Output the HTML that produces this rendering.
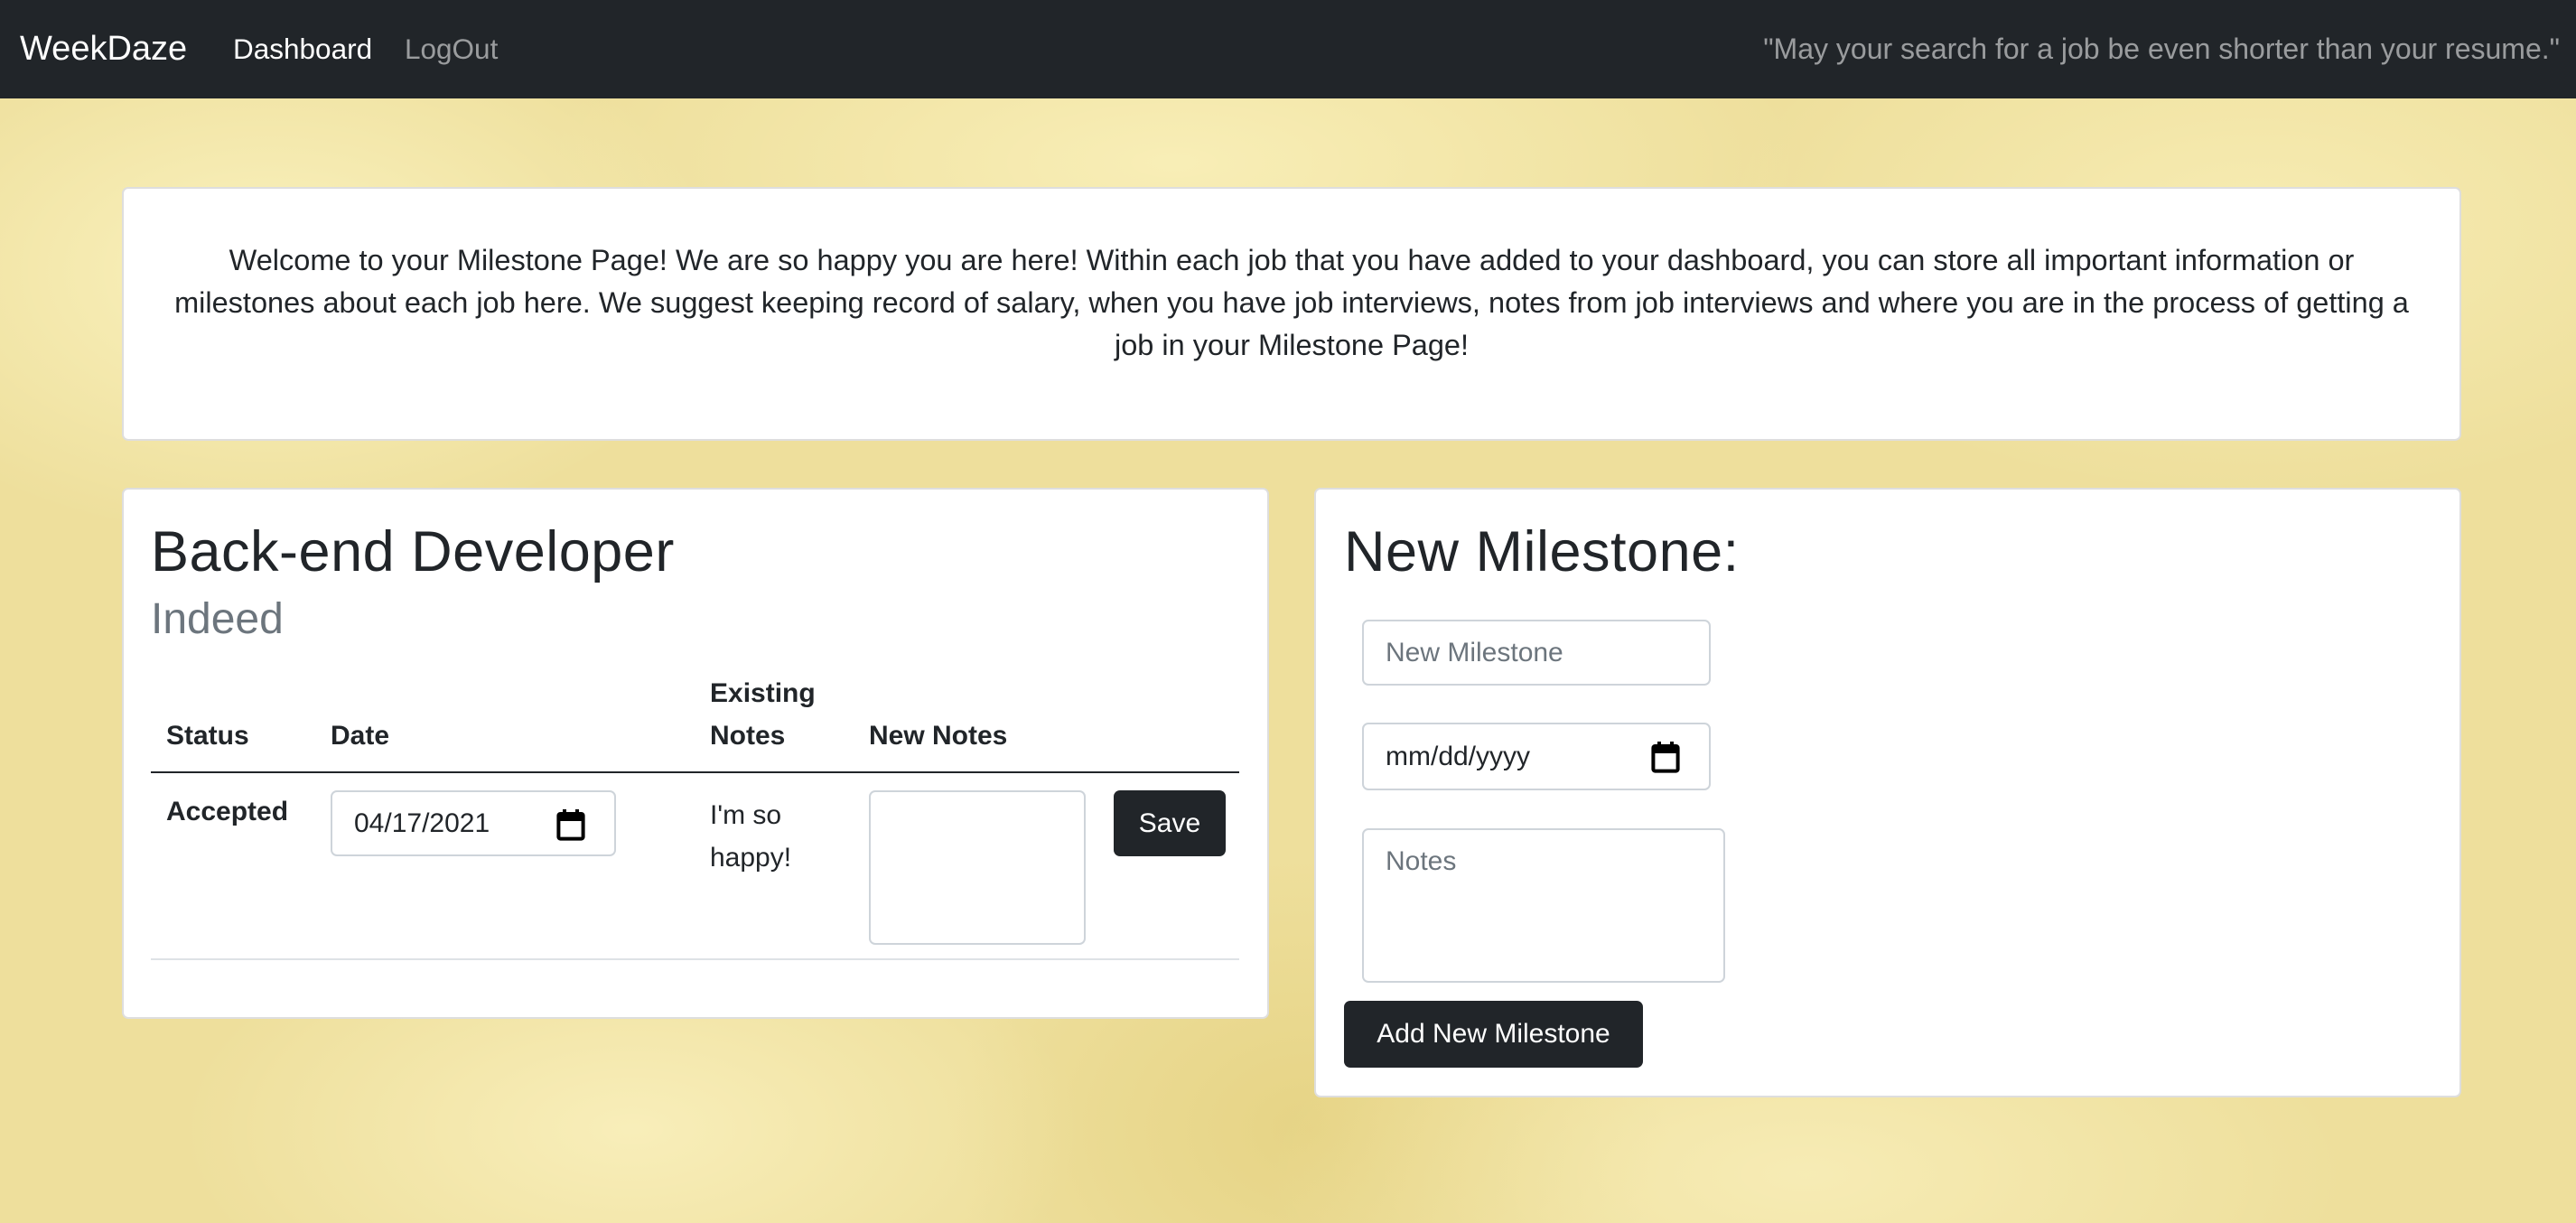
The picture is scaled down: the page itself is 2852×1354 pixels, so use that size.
<!DOCTYPE html>
<html><head><meta charset="utf-8"><style>
*{box-sizing:border-box;margin:0;padding:0}
body{width:2852px;height:1354px;overflow:hidden;position:relative;font-family:"Liberation Sans",sans-serif;color:#212529;
background:
radial-gradient(ellipse 500px 300px at 300px 300px,rgba(255,250,205,.7),transparent),
radial-gradient(ellipse 700px 250px at 1300px 180px,rgba(255,248,200,.6),transparent),
radial-gradient(ellipse 600px 300px at 2500px 250px,rgba(255,248,200,.5),transparent),
radial-gradient(ellipse 500px 250px at 700px 1250px,rgba(255,248,205,.6),transparent),
radial-gradient(ellipse 600px 250px at 2000px 1300px,rgba(255,248,205,.5),transparent),
radial-gradient(ellipse 400px 300px at 1450px 1250px,rgba(215,190,90,.35),transparent),
#eedf9c;}
.a{position:absolute}
.nav{left:0;top:0;width:2852px;height:109px;background:#212529}
.nav span{position:absolute;top:0;line-height:109px;font-size:31.5px}
.card{position:absolute;background:#fff;border:2px solid rgba(0,0,0,.13);border-radius:7px}
.t{position:absolute;white-space:nowrap}
.inp{position:absolute;border:2px solid #ced4da;border-radius:7px;background:#fff;font-size:30px;padding-left:24px;display:flex;align-items:center}
.btn{position:absolute;background:#212529;color:#fff;border-radius:7px;font-size:30px;display:flex;align-items:center;justify-content:center}
.line{position:absolute;height:2px}
</style></head><body>
<div class="a nav">
<span style="left:22px;color:#fff;font-size:38px">WeekDaze</span>
<span style="left:258px;color:#fff">Dashboard</span>
<span style="left:448px;color:rgba(255,255,255,.55)">LogOut</span>
<span style="right:18px;color:rgba(255,255,255,.55);font-size:32px">"May your search for a job be even shorter than your resume."</span>
</div>

<div class="card" style="left:135px;top:207px;width:2590px;height:281px">
<div style="position:absolute;left:0;right:0;top:56px;text-align:center;font-size:32.5px;line-height:47px;white-space:nowrap">Welcome to your Milestone Page! We are so happy you are here! Within each job that you have added to your dashboard, you can store all important information or<br>milestones about each job here. We suggest keeping record of salary, when you have job interviews, notes from job interviews and where you are in the process of getting a<br>job in your Milestone Page!</div>
</div>

<div class="card" style="left:135px;top:540px;width:1270px;height:588px"></div>
<div class="t" style="left:167px;top:578px;font-size:63px;line-height:66px;letter-spacing:0.5px">Back-end Developer</div>
<div class="t" style="left:167px;top:658px;font-size:48px;line-height:56px;color:#6c757d">Indeed</div>
<div class="t" style="left:786px;top:748px;font-size:30px;font-weight:bold;line-height:40px">Existing</div>
<div class="t" style="left:184px;top:795px;font-size:30px;font-weight:bold;line-height:40px">Status</div>
<div class="t" style="left:366px;top:795px;font-size:30px;font-weight:bold;line-height:40px">Date</div>
<div class="t" style="left:786px;top:795px;font-size:30px;font-weight:bold;line-height:40px">Notes</div>
<div class="t" style="left:962px;top:795px;font-size:30px;font-weight:bold;line-height:40px">New Notes</div>
<div class="line" style="left:167px;top:854px;width:1205px;background:#212529"></div>
<div class="t" style="left:184px;top:879px;font-size:30px;font-weight:bold;line-height:40px">Accepted</div>
<div class="inp" style="left:366px;top:875px;width:316px;height:73px;color:#212529">04/17/2021
<svg style="position:absolute;right:32px;top:18px" width="32" height="36" viewBox="0 0 16 18"><rect x="1.2" y="3" width="13.6" height="13.8" rx="1" fill="none" stroke="#000" stroke-width="2"/><rect x="1" y="3" width="14" height="4" fill="#000"/><rect x="3.5" y="0.5" width="2" height="3" fill="#000"/><rect x="10.5" y="0.5" width="2" height="3" fill="#000"/></svg></div>
<div class="t" style="left:786px;top:879px;font-size:30px;line-height:47px">I'm so<br>happy!</div>
<div class="inp" style="left:962px;top:875px;width:240px;height:171px"></div>
<div class="btn" style="left:1233px;top:875px;width:124px;height:73px">Save</div>
<div class="line" style="left:167px;top:1061px;width:1205px;background:#dee2e6"></div>

<div class="card" style="left:1455px;top:540px;width:1270px;height:675px"></div>
<div class="t" style="left:1488px;top:578px;font-size:63px;line-height:66px;letter-spacing:0.5px">New Milestone:</div>
<div class="inp" style="left:1508px;top:686px;width:386px;height:73px;color:#6c757d">New Milestone</div>
<div class="inp" style="left:1508px;top:800px;width:386px;height:75px">mm/dd/yyyy
<svg style="position:absolute;right:32px;top:18px" width="32" height="36" viewBox="0 0 16 18"><rect x="1.2" y="3" width="13.6" height="13.8" rx="1" fill="none" stroke="#000" stroke-width="2"/><rect x="1" y="3" width="14" height="4" fill="#000"/><rect x="3.5" y="0.5" width="2" height="3" fill="#000"/><rect x="10.5" y="0.5" width="2" height="3" fill="#000"/></svg></div>
<div class="inp" style="left:1508px;top:917px;width:402px;height:171px;align-items:flex-start;padding-top:18px;color:#6c757d">Notes</div>
<div class="btn" style="left:1488px;top:1108px;width:331px;height:74px">Add New Milestone</div>
</body></html>
